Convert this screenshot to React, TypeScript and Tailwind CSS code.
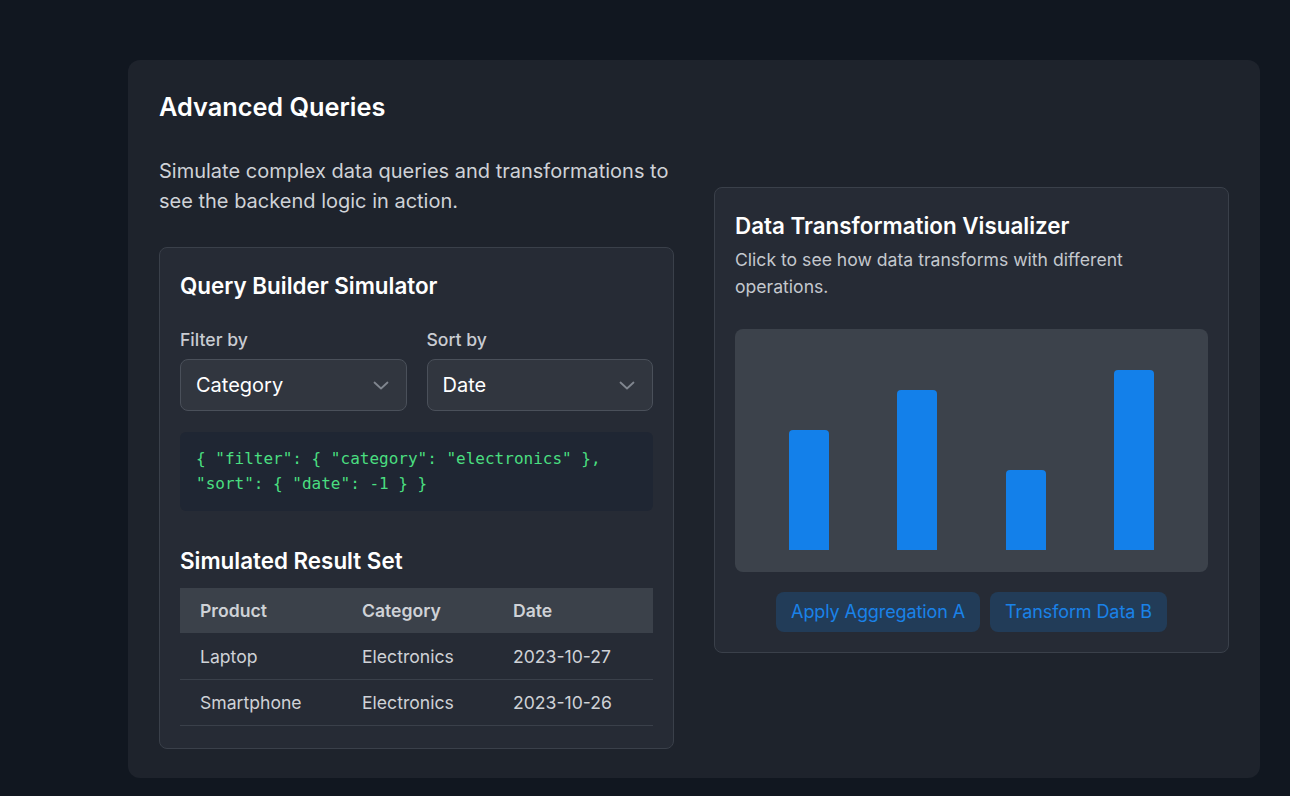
const ROWS = [
  { product: 'Laptop', category: 'Electronics', date: '2023-10-27' },
  { product: 'Smartphone', category: 'Electronics', date: '2023-10-26' },
];

const BARS = [60, 80, 40, 90];

function Select({ label, value }: { label: string; value: string }) {
  return (
    <div>
      <label className="block text-[17.6px] leading-6 font-medium text-[#c9ccd2] mb-[7px]">{label}</label>
      <div className="flex items-center justify-between h-[52px] pl-[15px] pr-[17px] rounded-lg border border-[#4a505a] bg-[#31363f] text-[20px] text-white">
        <span>{value}</span>
        <svg width="16" height="9" viewBox="0 0 16 9" fill="none">
          <path d="M1.5 1.5l6.5 6 6.5-6" stroke="#80868f" strokeWidth="1.8" strokeLinecap="round" strokeLinejoin="round" />
        </svg>
      </div>
    </div>
  );
}

export default function App() {
  return (
    <div
      className="min-h-[796px] bg-[#111720] pt-[60px] pl-[128px] pr-[30px] pb-[18px]"
      style={{ fontFamily: 'Inter, "Noto Sans", sans-serif' }}
    >
      <div className="rounded-xl bg-[#1e232c] px-[31px] pt-[31px] pb-[29px]">
        <div className="grid grid-cols-2 gap-10 items-center">
          {/* Left column */}
          <div>
            <h1 className="text-[25.3px] leading-8 font-semibold text-white">Advanced Queries</h1>
            <p className="mt-[33px] text-[20px] leading-[30px] text-[#cfd2d7]">
              Simulate complex data queries and transformations to see the backend logic in action.
            </p>

            <div className="mt-[31px] rounded-lg border border-[#3a404a] bg-[#262b35] px-5 pt-6 pb-[22px]">
              <h2 className="text-[22.4px] leading-7 font-semibold text-white">Query Builder Simulator</h2>

              <div className="mt-7 grid grid-cols-2 gap-5">
                <Select label="Filter by" value="Category" />
                <Select label="Sort by" value="Date" />
              </div>

              <div
                className="mt-[21px] rounded-md bg-[#1f2633] px-4 pt-[14px] pb-[15px] text-[16px] leading-[25px] text-[#4ade80]"
                style={{ fontFamily: '"DejaVu Sans Mono", monospace' }}
              >
                {'{ "filter": { "category": "electronics" }, "sort": { "date": -1 } }'}
              </div>

              <h3 className="mt-9 text-[22.4px] leading-7 font-semibold text-white">Simulated Result Set</h3>

              <table className="mt-[13px] w-full text-left text-[17.6px] text-[#cfd2d7]">
                <thead>
                  <tr className="bg-[#3b414a]">
                    <th className="w-[162px] pl-5 pt-px h-[45px] font-semibold">Product</th>
                    <th className="w-[151px] pl-5 pt-px h-[45px] font-semibold">Category</th>
                    <th className="pl-5 pt-px h-[45px] font-semibold">Date</th>
                  </tr>
                </thead>
                <tbody>
                  {ROWS.map((r) => (
                    <tr key={r.product} className="border-b border-[#3a404a]">
                      <td className="pl-5 pt-[3px] h-[46px]">{r.product}</td>
                      <td className="pl-5 pt-[3px] h-[46px]">{r.category}</td>
                      <td className="pl-5 pt-[3px] h-[46px]">{r.date}</td>
                    </tr>
                  ))}
                </tbody>
              </table>
            </div>
          </div>

          {/* Right column */}
          <div className="rounded-lg border border-[#3a404a] bg-[#262b35] px-5 pt-6 pb-5">
            <h2 className="text-[22.4px] leading-7 font-semibold text-white">Data Transformation Visualizer</h2>
            <p className="mt-1.5 text-[17.6px] leading-[27px] text-[#c4c8ce]">
              Click to see how data transforms with different operations.
            </p>

            <div className="mt-[29px] rounded-lg bg-[#3c424b] px-5 pt-[21px] pb-[22px]">
              <div className="flex h-[200px] items-end justify-around">
                {BARS.map((h, i) => (
                  <div key={i} className="w-10 rounded-t-sm bg-[#1380ea]" style={{ height: `${h}%` }} />
                ))}
              </div>
            </div>

            <div className="mt-5 flex justify-center gap-[10px]">
              <button className="rounded-lg bg-[#223c58] px-[15px] py-1.5 text-lg leading-7 tracking-[-0.1px] text-[#1a82e8]">
                Apply Aggregation A
              </button>
              <button className="rounded-lg bg-[#223c58] px-[15px] py-1.5 text-lg leading-7 tracking-[-0.1px] text-[#1a82e8]">
                Transform Data B
              </button>
            </div>
          </div>
        </div>
      </div>
    </div>
  );
}
